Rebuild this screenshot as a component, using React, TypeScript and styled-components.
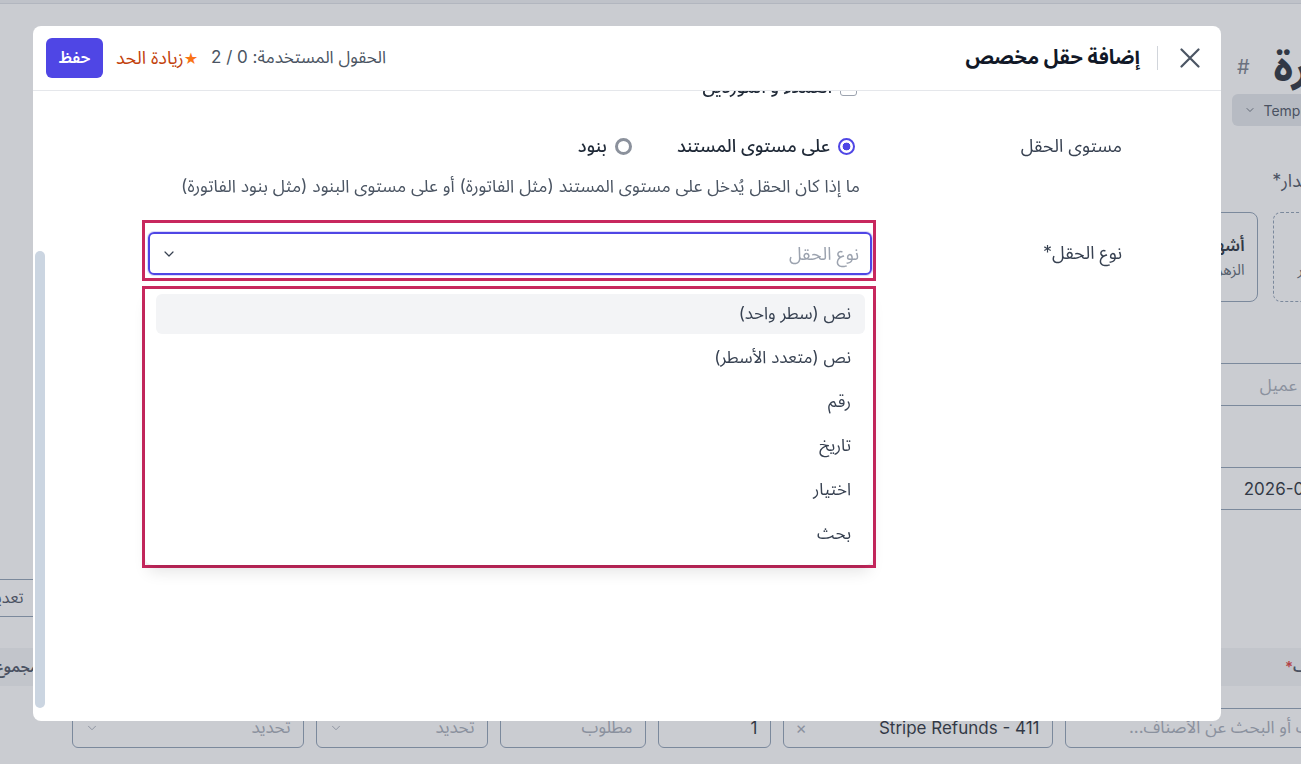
import React, { useLayoutEffect, useRef, useState } from 'react';
import styled, { createGlobalStyle, css } from 'styled-components';
import { ChevronDown } from 'lucide-react';

const GlobalStyle = createGlobalStyle`
  html, body {
    margin: 0;
    padding: 0;
    overflow: hidden;
  }
  body {
    font-family: Inter, "Noto Sans Arabic", "Noto Sans", "DejaVu Sans", sans-serif;
    color: #111827;
  }
  * {
    box-sizing: border-box;
  }
`;

/* ---------- page behind the dialog ---------- */

const Viewport = styled.div`
  width: 100vw;
  height: 100vh;
  overflow: hidden;
  display: flex;
  justify-content: center;
  background: #ffffff;
`;

const Page = styled.div`
  flex: 0 0 1500px;
  direction: rtl;
  display: flex;
  flex-direction: column;
`;

const TopStrip = styled.div`
  height: 4px;
  background: #eef0f3;
  border-bottom: 1px solid #d9dde3;
`;

const Main = styled.div`
  padding: 0 20px;
  display: flex;
  flex-direction: column;
`;

const TitleRow = styled.div`
  margin-top: 38px;
  height: 50px;
  display: flex;
  align-items: center;
  gap: 24px;
`;

const PageTitle = styled.h1`
  margin: 0;
  font-size: 42px;
  font-weight: 700;
  color: #111827;
`;

const Hash = styled.span`
  font-size: 20px;
  color: #6b7280;
`;

const TemplateChip = styled.div`
  align-self: flex-start;
  width: 149px;
  height: 32px;
  margin-top: 2px;
  background: #e2e5e9;
  border-radius: 6px;
  display: flex;
  direction: ltr;
  align-items: center;
  gap: 8px;
  padding: 0 12px;
  font-size: 14px;
  color: #374151;
  white-space: nowrap;
  overflow: hidden;
  & svg {
    flex-shrink: 0;
  }
`;

const PageLabel = styled.div`
  margin-top: 43px;
  font-size: 18px;
  line-height: 24px;
  color: #374151;
`;

const CardRow = styled.div`
  margin-top: 19px;
  display: flex;
  gap: 15px;
`;

const SourceCard = styled.div<{ $dashed?: boolean }>`
  width: 108px;
  height: 90px;
  border: 1px ${(p) => (p.$dashed ? 'dashed' : 'solid')} #8496ad;
  border-radius: 8px;
  display: flex;
  flex-direction: column;
  justify-content: center;
  align-items: ${(p) => (p.$dashed ? 'center' : 'flex-start')};
  gap: 5px;
  padding: 0 12px;
  white-space: nowrap;
  overflow: hidden;
`;

const CardTitle = styled.div`
  font-size: 17px;
  font-weight: 600;
  line-height: 20px;
  color: #111827;
`;

const CardSub = styled.div`
  font-size: 15px;
  line-height: 20px;
  color: #4b5563;
`;

const PageInput = styled.input<{ $w?: number }>`
  align-self: flex-start;
  width: ${(p) => p.$w ?? 700}px;
  height: 43px;
  margin-top: 61px;
  border: 1px solid #8496ad;
  border-radius: 6px;
  padding: 0 14px;
  font: inherit;
  font-size: 17px;
  color: #111827;
  background: #fff;
  &::placeholder {
    color: #9ca3af;
  }
`;

const Toolbar = styled.div`
  margin-top: 69px;
  display: flex;
  justify-content: flex-end;
`;

const GhostButton = styled.button`
  height: 38px;
  padding: 0 14px;
  border: 1px solid #8496ad;
  border-radius: 6px;
  background: #fff;
  font: inherit;
  font-size: 16px;
  color: #374151;
`;

const tableCols = css`
  display: grid;
  grid-template-columns: 316px 270px 113px 146px 172px 232px 1fr;
  column-gap: 12px;
  align-items: center;
`;

const TableHead = styled.div`
  ${tableCols};
  margin-top: 31px;
  height: 38px;
  background: #f3f4f6;
`;

const HeadCell = styled.div`
  padding: 0 12px;
  font-size: 15px;
  font-weight: 600;
  color: #374151;
  white-space: nowrap;
`;

const Req = styled.span`
  color: #dc2626;
`;

const ItemRow = styled.div`
  ${tableCols};
  margin-top: 22px;
  height: 40px;
`;

const CellBox = styled.div<{ $muted?: boolean }>`
  height: 40px;
  border: 1px solid #8496ad;
  border-radius: 6px;
  display: flex;
  align-items: center;
  justify-content: space-between;
  padding: 0 12px;
  font-size: 17px;
  color: ${(p) => (p.$muted ? '#9ca3af' : '#111827')};
  white-space: nowrap;
  overflow: hidden;
  background: #fff;
`;

const Faint = styled.span`
  color: #9ca3af;
  display: flex;
`;

/* ---------- dialog ---------- */

const Overlay = styled.div`
  position: fixed;
  inset: 0;
  background: rgba(107, 114, 128, 0.36);
  display: flex;
  padding: 26px 80px 43px 33px;
`;

const Dialog = styled.div`
  flex: 1;
  direction: rtl;
  background: #ffffff;
  border-radius: 8px;
  display: flex;
  flex-direction: column;
  overflow: hidden;
`;

const DialogHeader = styled.div`
  height: 65px;
  flex: 0 0 65px;
  border-bottom: 1px solid #e5e7eb;
  display: flex;
  align-items: center;
  justify-content: space-between;
  padding: 0 21px 0 13px;
`;

const HeaderGroup = styled.div`
  display: flex;
  align-items: center;
  gap: 13px;
`;

const CloseButton = styled.button`
  width: 20px;
  height: 20px;
  padding: 0;
  border: none;
  background: none;
  display: flex;
  color: #4b5563;
`;

const Divider = styled.div`
  width: 1px;
  height: 24px;
  background: #d1d5db;
  margin: 0 9px 0 4px;
`;

const DialogTitle = styled.h2`
  margin: 0;
  font-size: 20px;
  font-weight: 700;
  color: #111827;
`;

const UsedText = styled.span`
  font-size: 17px;
  color: #4b5563;
`;

const UpgradeLink = styled.span`
  font-size: 18px;
  color: #c2410c;
  display: flex;
  align-items: center;
`;

const Star = styled.span`
  color: #f97316;
  font-family: "DejaVu Sans", sans-serif;
  font-size: 16px;
`;

const SaveButton = styled.button`
  width: 57px;
  height: 40px;
  border: none;
  border-radius: 6px;
  background: #4f46e5;
  color: #ffffff;
  font: inherit;
  font-size: 16px;
  font-weight: 600;
`;

const BodyFrame = styled.div`
  flex: 1;
  min-height: 0;
  position: relative;
  display: flex;
`;

const DialogBody = styled.div`
  flex: 1;
  position: relative;
  overflow-y: auto;
  scrollbar-width: none;
  &::-webkit-scrollbar {
    display: none;
  }
`;

const ScrollThumb = styled.div`
  position: absolute;
  left: 2px;
  width: 10px;
  border-radius: 5px;
  background: #cbd5e1;
`;

const Form = styled.div`
  display: flex;
  flex-direction: column;
  gap: 24px;
  padding: 8px 99px 153px 109px;
`;

const FieldRow = styled.div<{ $lead?: number }>`
  display: grid;
  grid-template-columns: 225px 734px;
  column-gap: 21px;
  margin-top: ${(p) => p.$lead ?? 0}px;
`;

const FieldLabel = styled.div<{ $top?: number }>`
  padding-top: ${(p) => p.$top ?? 0}px;
  font-size: 18px;
  line-height: 24px;
  color: #374151;
`;

const FieldCol = styled.div`
  display: flex;
  flex-direction: column;
`;

const TextInput = styled.input`
  height: 42px;
  border: 1px solid #d1d5db;
  border-radius: 6px;
  padding: 0 12px;
  font: inherit;
  font-size: 17px;
  &::placeholder {
    color: #9ca3af;
  }
`;

const CheckList = styled.div`
  display: flex;
  flex-direction: column;
  gap: 8px;
  padding-right: 19px;
`;

const OptionLine = styled.label`
  display: flex;
  align-items: center;
  gap: 8px;
  height: 24px;
  font-size: 18px;
  font-weight: 500;
  color: #1f2937;
`;

const CheckBox = styled.span`
  width: 17px;
  height: 17px;
  border: 1.5px solid #9ca3af;
  border-radius: 3px;
  background: #fff;
`;

const RadioGroup = styled.div`
  display: flex;
  align-items: center;
  gap: 45px;
  padding-right: 21px;
`;

const Radio = styled.span<{ $on?: boolean }>`
  width: 17px;
  height: 17px;
  border-radius: 50%;
  flex: 0 0 17px;
  ${(p) =>
    p.$on
      ? css`
          border: 2px solid #4f46e5;
          background: radial-gradient(circle, #4f46e5 0 3.6px, #ffffff 4.2px);
        `
      : css`
          border: 3px solid #8b919c;
          background: #fff;
        `}
`;

const Hint = styled.div`
  margin-top: 18px;
  padding-right: 16px;
  font-size: 17.4px;
  line-height: 20px;
  color: #4b5563;
  white-space: nowrap;
`;

const Annotated = styled.div<{ $pad: string }>`
  border: 3px solid #c8285e;
  padding: ${(p) => p.$pad};
`;

const SelectBox = styled.div`
  height: 43px;
  border: 2px solid #4f46e5;
  border-radius: 6px;
  box-shadow: 0 0 0 1px rgba(79, 70, 229, 0.2);
  display: flex;
  align-items: center;
  justify-content: space-between;
  padding: 0 11px 0 11px;
  font-size: 18px;
  color: #9ca3af;
  & svg {
    color: #374151;
  }
`;

const MenuGap = styled.div`
  height: 5px;
`;

const Menu = styled.div`
  background: #ffffff;
  border-radius: 8px;
  box-shadow: 0 10px 15px -3px rgba(0, 0, 0, 0.1), 0 4px 6px -4px rgba(0, 0, 0, 0.1);
  padding: 5px 8px 11px 11px;
  display: flex;
  flex-direction: column;
  gap: 4px;
`;

const MenuItem = styled.div<{ $active?: boolean }>`
  height: 40px;
  border-radius: 6px;
  display: flex;
  align-items: center;
  padding: 0 14px;
  font-size: 17px;
  color: #374151;
  background: ${(p) => (p.$active ? '#f3f4f6' : 'transparent')};
`;

const fieldTypes = ['نص (سطر واحد)', 'نص (متعدد الأسطر)', 'رقم', 'تاريخ', 'اختيار', 'بحث'];

const XMark = () => (
  <svg width="20" height="20" viewBox="0 0 20 20" fill="none">
    <path d="M1.5 1.5L18.5 18.5M18.5 1.5L1.5 18.5" stroke="currentColor" strokeWidth="2.2" strokeLinecap="round" />
  </svg>
);

const SmallChevron = ({ size = 12 }: { size?: number }) => <ChevronDown size={size} strokeWidth={1.6} />;

function BackgroundPage() {
  return (
    <Viewport>
      <Page>
        <TopStrip />
        <Main>
          <TitleRow>
            <PageTitle>فاتورة</PageTitle>
            <Hash>#</Hash>
          </TitleRow>
          <TemplateChip>
            <SmallChevron />
            <span>Template: Classic</span>
          </TemplateChip>
          <PageLabel>مصدر الإصدار*</PageLabel>
          <CardRow>
            <SourceCard $dashed>
              <CardTitle>+</CardTitle>
              <CardSub>إضافة آخر</CardSub>
            </SourceCard>
            <SourceCard>
              <CardTitle>أشهر</CardTitle>
              <CardSub>الزهراء</CardSub>
            </SourceCard>
            <SourceCard>
              <CardTitle>شهري</CardTitle>
              <CardSub>النور</CardSub>
            </SourceCard>
          </CardRow>
          <PageInput readOnly placeholder="ابحث عن عميل" />
          <PageInput readOnly $w={500} value="2026-01-20" style={{ paddingRight: 40 }} />
          <Toolbar>
            <GhostButton>تعديل الأعمدة</GhostButton>
          </Toolbar>
          <TableHead>
            <HeadCell>
              اسم الصنف<Req>*</Req>
            </HeadCell>
            <HeadCell>الحساب</HeadCell>
            <HeadCell>الكمية</HeadCell>
            <HeadCell>السعر</HeadCell>
            <HeadCell>الضريبة</HeadCell>
            <HeadCell>الخصم</HeadCell>
            <HeadCell>المجموع</HeadCell>
          </TableHead>
          <ItemRow>
            <CellBox $muted>اختر صنف أو البحث عن الأصناف...</CellBox>
            <CellBox>
              <span>Stripe Refunds - 411</span>
              <Faint>×</Faint>
            </CellBox>
            <CellBox>1</CellBox>
            <CellBox $muted>مطلوب</CellBox>
            <CellBox $muted>
              <span>تحديد</span>
              <Faint>
                <SmallChevron size={14} />
              </Faint>
            </CellBox>
            <CellBox $muted>
              <span>تحديد</span>
              <Faint>
                <SmallChevron size={14} />
              </Faint>
            </CellBox>
            <div />
          </ItemRow>
        </Main>
      </Page>
    </Viewport>
  );
}

export default function App() {
  const bodyRef = useRef<HTMLDivElement>(null);
  const levelRef = useRef<HTMLDivElement>(null);
  const [thumb, setThumb] = useState({ top: 0, height: 0 });

  useLayoutEffect(() => {
    const body = bodyRef.current;
    const level = levelRef.current;
    if (!body || !level) return;
    body.scrollTop = level.offsetTop - 43;
    const track = body.clientHeight - 13;
    const height = (track * body.clientHeight) / body.scrollHeight;
    const max = body.scrollHeight - body.clientHeight;
    const top = max > 0 ? (body.scrollTop / max) * (track - height) : 0;
    setThumb({ top, height });
  }, []);

  return (
    <>
      <GlobalStyle />
      <BackgroundPage />
      <Overlay>
        <Dialog>
          <DialogHeader>
            <HeaderGroup>
              <CloseButton aria-label="إغلاق">
                <XMark />
              </CloseButton>
              <Divider />
              <DialogTitle>إضافة حقل مخصص</DialogTitle>
            </HeaderGroup>
            <HeaderGroup>
              <UsedText>الحقول المستخدمة: 0 / 2</UsedText>
              <UpgradeLink>
                <Star>★</Star>
                زيادة الحد
              </UpgradeLink>
              <SaveButton>حفظ</SaveButton>
            </HeaderGroup>
          </DialogHeader>

          <BodyFrame>
            <DialogBody ref={bodyRef}>
              <Form>
                <FieldRow>
                  <FieldLabel $top={9}>
                    اسم الحقل<Req>*</Req>
                  </FieldLabel>
                  <FieldCol>
                    <TextInput readOnly placeholder="مثال: رقم أمر الشراء" />
                  </FieldCol>
                </FieldRow>
                <FieldRow>
                  <FieldLabel $top={9}>مفتاح الحقل</FieldLabel>
                  <FieldCol>
                    <TextInput readOnly placeholder="po_number" />
                  </FieldCol>
                </FieldRow>
                <FieldRow>
                  <FieldLabel>يظهر في</FieldLabel>
                  <CheckList>
                    <OptionLine>
                      <CheckBox />
                      الفواتير
                    </OptionLine>
                    <OptionLine>
                      <CheckBox />
                      عروض الأسعار
                    </OptionLine>
                    <OptionLine>
                      <CheckBox />
                      العملاء و الموردين
                    </OptionLine>
                  </CheckList>
                </FieldRow>

                <FieldRow ref={levelRef} $lead={11}>
                  <FieldLabel>مستوى الحقل</FieldLabel>
                  <FieldCol>
                    <RadioGroup>
                      <OptionLine>
                        <Radio $on />
                        على مستوى المستند
                      </OptionLine>
                      <OptionLine>
                        <Radio />
                        بنود
                      </OptionLine>
                    </RadioGroup>
                    <Hint>ما إذا كان الحقل يُدخل على مستوى المستند (مثل الفاتورة) أو على مستوى البنود (مثل بنود الفاتورة)</Hint>
                  </FieldCol>
                </FieldRow>

                <FieldRow>
                  <FieldLabel $top={21}>نوع الحقل*</FieldLabel>
                  <FieldCol>
                    <Annotated $pad="9px 1px 3px 3px">
                      <SelectBox>
                        <span>نوع الحقل</span>
                        <ChevronDown size={16} strokeWidth={1.8} />
                      </SelectBox>
                    </Annotated>
                    <MenuGap />
                    <Annotated $pad="0">
                      <Menu>
                        {fieldTypes.map((t, i) => (
                          <MenuItem key={t} $active={i === 0}>
                            {t}
                          </MenuItem>
                        ))}
                      </Menu>
                    </Annotated>
                  </FieldCol>
                </FieldRow>
              </Form>
            </DialogBody>
            <ScrollThumb style={{ top: thumb.top, height: thumb.height }} />
          </BodyFrame>
        </Dialog>
      </Overlay>
    </>
  );
}
